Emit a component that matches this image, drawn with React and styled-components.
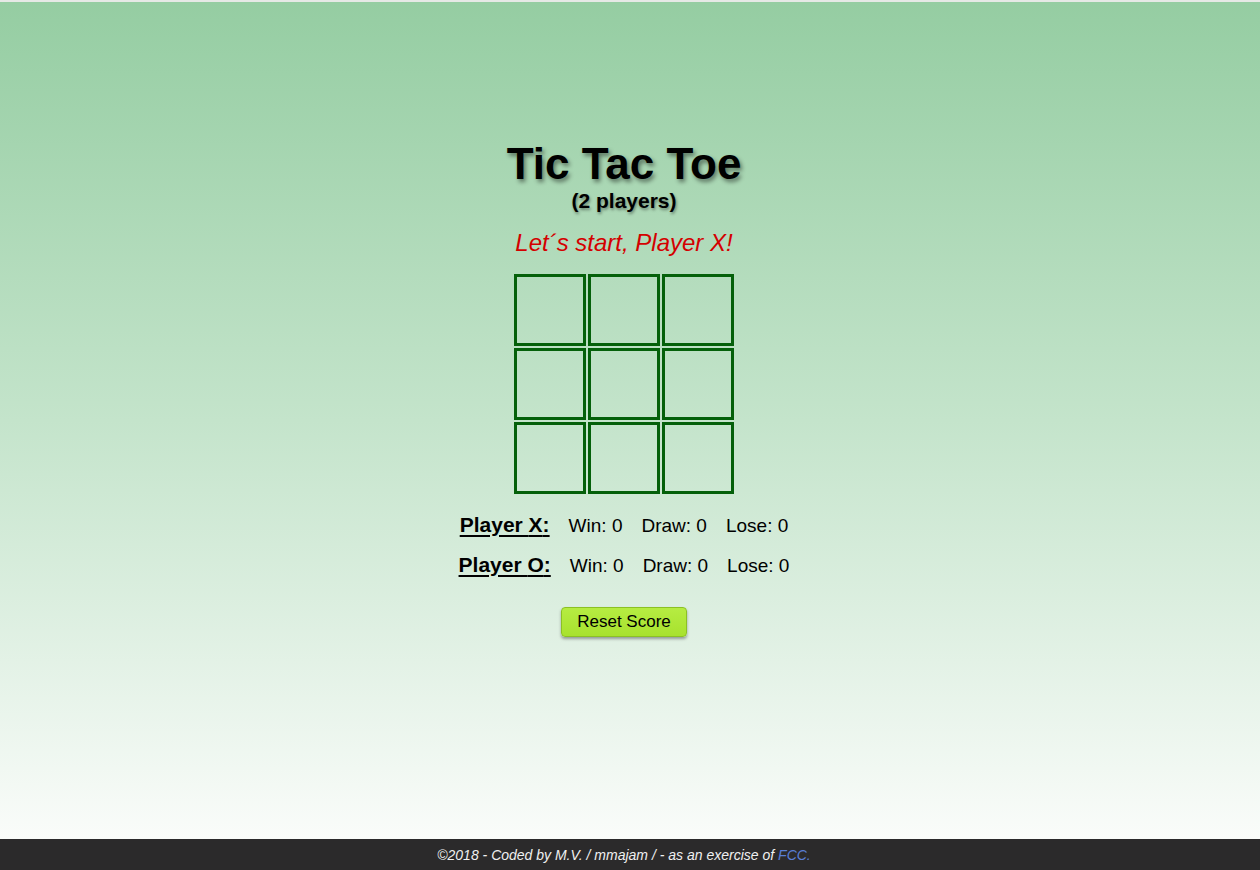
import React from "react";
import styled, { createGlobalStyle } from "styled-components";

const Global = createGlobalStyle`
  html, body { margin: 0; padding: 0; }
  body { font-family: "Liberation Sans", Arial, sans-serif; }
`;

const Page = styled.div`
  display: flex;
  flex-direction: column;
  min-height: 870px;
  padding-right: 12px;
  box-sizing: border-box;
  background: #2b2a2b;
`;

const Main = styled.main`
  flex: 1;
  display: flex;
  flex-direction: column;
  align-items: center;
  border-top: 2px solid #e6e9e6;
  margin-right: -12px;
  padding-right: 12px;
  padding-top: 138px;
  background: linear-gradient(to bottom, #95cda2 0%, #c4e4cb 50%, #fafcfa 100%);
`;

const Title = styled.h1`
  margin: 0;
  font-size: 44px;
  line-height: 48px;
  font-weight: bold;
  color: #000;
  text-shadow: 2px 3px 4px rgba(0, 0, 0, 0.45);
`;

const Subtitle = styled.h2`
  margin: 1px 0 0;
  font-size: 21px;
  line-height: 24px;
  font-weight: bold;
  color: #000;
  text-shadow: 1px 2px 3px rgba(0, 0, 0, 0.4);
`;

const Status = styled.p`
  margin: 15px 0 0;
  font-size: 24px;
  line-height: 30px;
  font-style: italic;
  color: #d40000;
`;

const Board = styled.div`
  margin-top: 16px;
  display: grid;
  grid-template-columns: repeat(3, 72px);
  grid-auto-rows: 72px;
  gap: 2px;
`;

const Cell = styled.button`
  box-sizing: border-box;
  width: 72px;
  height: 72px;
  padding: 0;
  margin: 0;
  border: 3px solid #04600a;
  background: transparent;
  cursor: pointer;
`;

const Scores = styled.div`
  margin-top: 12px;
  display: flex;
  flex-direction: column;
  align-items: center;
`;

const ScoreRow = styled.div`
  font-size: 19px;
  line-height: 40px;
  height: 40px;
  color: #000;
  white-space: nowrap;
`;

const PlayerName = styled.span`
  font-size: 21px;
  line-height: 20px;
  font-weight: bold;
  text-decoration: underline;
  text-underline-offset: 3px;
  margin-right: 19px;
`;

const Stat = styled.span`
  & + & { margin-left: 19px; }
`;

const ResetButton = styled.button`
  margin-top: 21px;
  height: 30px;
  padding: 0 15px;
  font-family: "Liberation Sans", Arial, sans-serif;
  font-size: 17px;
  color: #000;
  background: linear-gradient(to bottom, #b6ec42, #a8e22e);
  border: 1px solid #8cc124;
  border-radius: 4px;
  box-shadow: 0 2px 3px rgba(0, 0, 0, 0.35);
  cursor: pointer;
`;

const Footer = styled.footer`
  height: 31px;
  display: flex;
  align-items: center;
  justify-content: center;
  background: #2b2a2b;
  color: #f0f0f0;
  font-size: 14px;
  font-style: italic;
`;

const Link = styled.a`
  color: #5a7fd6;
  text-decoration: none;
  margin-left: 4px;
`;

const players = ["X", "O"];

export default function App() {
  return (
    <>
      <Global />
      <Page>
        <Main>
          <Title>Tic Tac Toe</Title>
          <Subtitle>(2 players)</Subtitle>
          <Status>Let´s start, Player X!</Status>
          <Board>
            {Array.from({ length: 9 }).map((_, i) => (
              <Cell key={i} aria-label={`cell ${i + 1}`} />
            ))}
          </Board>
          <Scores>
            {players.map((p) => (
              <ScoreRow key={p}>
                <PlayerName>Player {p}:</PlayerName>
                <Stat>Win: 0</Stat>
                <Stat>Draw: 0</Stat>
                <Stat>Lose: 0</Stat>
              </ScoreRow>
            ))}
          </Scores>
          <ResetButton>Reset Score</ResetButton>
        </Main>
        <Footer>
          ©2018 - Coded by M.V. / mmajam / - as an exercise of<Link href="#">FCC.</Link>
        </Footer>
      </Page>
    </>
  );
}
